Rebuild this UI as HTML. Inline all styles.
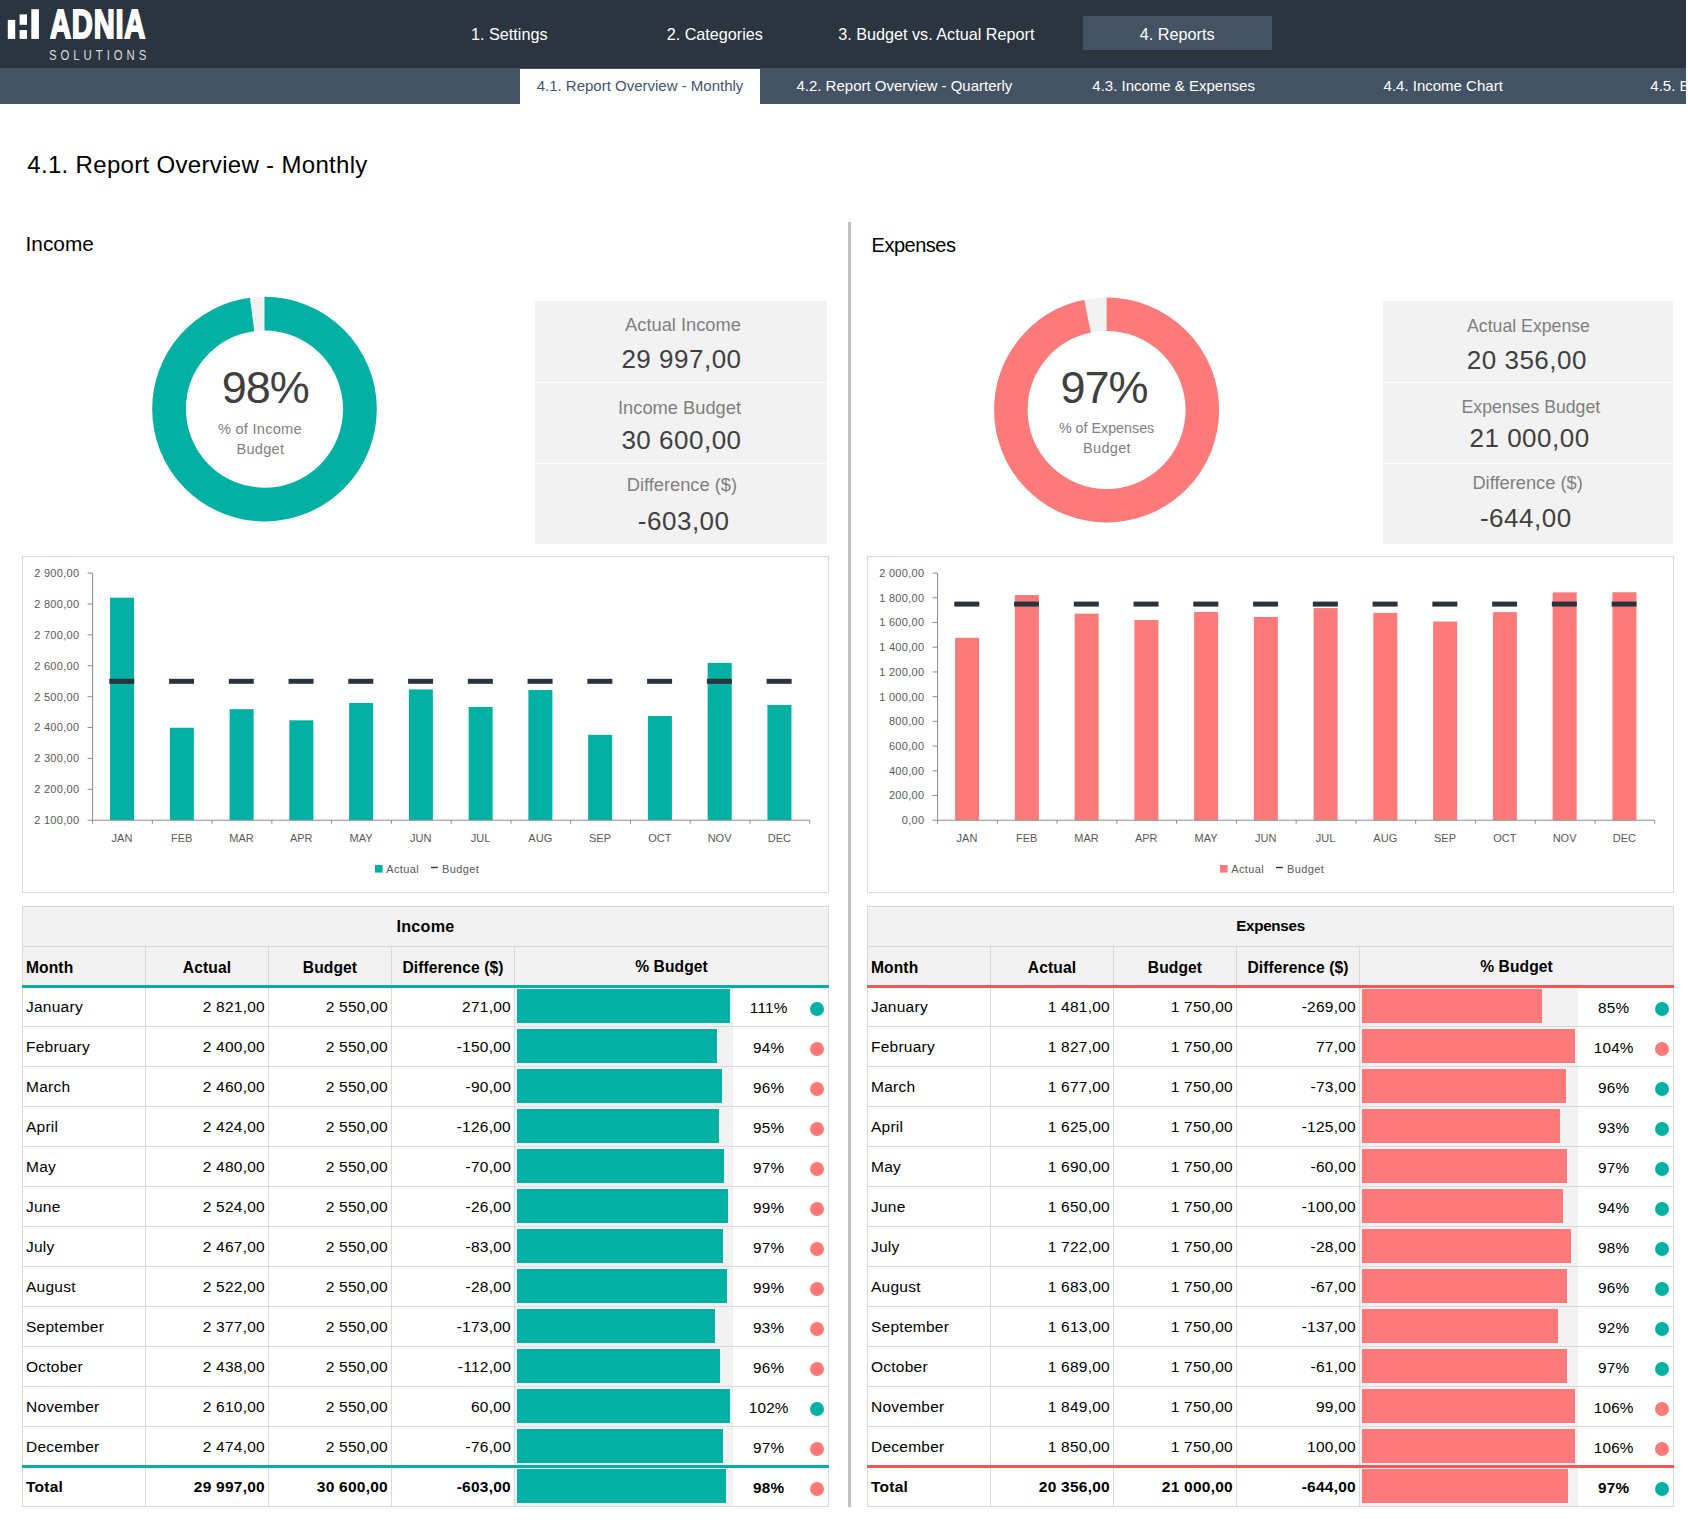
<!DOCTYPE html>
<html lang="en"><head><meta charset="utf-8"><title>4.1. Report Overview - Monthly</title>
<style>
html,body{margin:0;padding:0;background:#fff;}
body{width:1688px;height:1525px;position:relative;overflow:hidden;font-family:"Liberation Sans", sans-serif;}
.abs{position:absolute;}
.t{position:absolute;white-space:nowrap;}
header{position:absolute;left:0;top:0;width:1686px;height:68px;background:#2b353f;}
nav.sub{position:absolute;left:0;top:68px;width:1686px;height:36px;background:#435364;overflow:hidden;}
.tab-on{position:absolute;left:520px;top:1px;width:240px;height:35px;background:#fff;}
.btn-on{position:absolute;left:1083px;top:16px;width:189px;height:34px;background:#435364;}
.vline{position:absolute;left:848px;top:222px;width:3px;height:1285px;background:#bfbfbf;}
.stat{position:absolute;top:301px;width:292px;height:243px;background:#f2f2f2;}
.stat i{position:absolute;left:0;width:100%;height:1px;background:#fff;}
.chartbox{position:absolute;border:1px solid #d9d9d9;background:#fff;}
table.tb{position:absolute;border-collapse:separate;border-spacing:0;table-layout:fixed;width:807px;border-left:1px solid #d9d9d9;border-top:1px solid #d9d9d9;font-size:15.5px;letter-spacing:0.25px;color:#000;}
table.tb th,table.tb td{box-sizing:border-box;border-right:1px solid #d9d9d9;border-bottom:1px solid #d9d9d9;padding:0 3px 0 3px;text-align:right;font-weight:normal;white-space:nowrap;overflow:hidden;vertical-align:top;line-height:16px;}
table.tb th{background:#f2f2f2;font-weight:bold;text-align:center;font-size:15.6px;letter-spacing:0.1px;}
table.tb tr.ttl th{font-size:16.2px;padding-top:11.4px;letter-spacing:0.25px;}
table.tb tr.hd th{padding-top:13.2px;}
table.tb .l{text-align:left;}
table.tb tr.tot td{font-weight:bold;}
table.tb td.pb{padding:0;}
.pw{position:relative;width:313px;overflow:hidden;}
.pw span{position:absolute;display:block;}
.pw .bg{left:0.3px;top:0;width:217.3px;height:100%;background:#f2f2f2;}
.pw .bar{left:2px;height:33.5px;}
.pw .pc{left:203.7px;width:100px;text-align:center;font-size:15.3px;line-height:15.3px;letter-spacing:0.2px;}
.pw .dot{left:294.6px;width:14.2px;height:14.2px;border-radius:50%;}
</style></head><body>

<header>
<svg class="abs" style="left:0;top:0" width="48" height="48" viewBox="0 0 48 48"><rect x="7.8" y="19.9" width="7.4" height="19" fill="#fff"/><rect x="19.6" y="14.4" width="7.4" height="10.4" fill="#fff"/><rect x="19.6" y="30.1" width="7.4" height="8.8" fill="#fff"/><rect x="31.3" y="9.2" width="7.6" height="29.7" fill="#fff"/></svg>
<div class="t" style="left:49.8px;top:3.2px;font-size:41.5px;line-height:41.5px;font-weight:bold;color:#fff;transform-origin:0 0;transform:scaleX(0.70);-webkit-text-stroke:2px #fff;letter-spacing:1.2px">ADNIA</div>
<div class="t" style="left:48.6px;top:47.8px;font-size:14.2px;line-height:14.2px;color:#d9d9d9;letter-spacing:4.95px;transform-origin:0 0;transform:scaleX(0.8)">SOLUTIONS</div>
<div class="btn-on"></div>
<div class="t" style="left:509.30px;top:25.69px;font-size:16.20px;line-height:16.20px;color:#fff;transform:translateX(-50%);">1. Settings</div>
<div class="t" style="left:714.80px;top:25.69px;font-size:16.20px;line-height:16.20px;color:#fff;transform:translateX(-50%);">2. Categories</div>
<div class="t" style="left:936.30px;top:25.69px;font-size:16.20px;line-height:16.20px;color:#fff;transform:translateX(-50%);">3. Budget vs. Actual Report</div>
<div class="t" style="left:1177.20px;top:25.69px;font-size:16.20px;line-height:16.20px;color:#fff;transform:translateX(-50%);">4. Reports</div>
</header>
<nav class="sub"><div class="tab-on"></div>
<div class="t" style="left:640.00px;top:10.30px;font-size:15.00px;line-height:15.00px;color:#44546a;transform:translateX(-50%);">4.1. Report Overview - Monthly</div>
<div class="t" style="left:904.40px;top:10.30px;font-size:15.00px;line-height:15.00px;color:#fff;transform:translateX(-50%);">4.2. Report Overview - Quarterly</div>
<div class="t" style="left:1173.60px;top:9.60px;font-size:15.00px;line-height:15.00px;color:#fff;transform:translateX(-50%);">4.3. Income &amp; Expenses</div>
<div class="t" style="left:1443.20px;top:9.60px;font-size:15.00px;line-height:15.00px;color:#fff;transform:translateX(-50%);">4.4. Income Chart</div>
<div class="t" style="left:1650.30px;top:9.60px;font-size:15.00px;line-height:15.00px;color:#fff;">4.5. Expenses Chart</div>
</nav>
<main>
<div class="t" style="left:27.30px;top:152.88px;font-size:24.00px;line-height:24.00px;color:#000;letter-spacing:0.32px;">4.1. Report Overview - Monthly</div>
<div class="vline"></div>
<section>
<div class="t" style="left:25.60px;top:234.39px;font-size:20.80px;line-height:20.80px;color:#000;">Income</div>
<svg class="abs" style="left:148px;top:292px" width="232" height="232" viewBox="148.00 292.00 232 232"><circle cx="264.50" cy="409.10" r="95.45" fill="none" stroke="#f2f2f2" stroke-width="33.70"/><circle cx="264.50" cy="409.10" r="95.45" fill="none" stroke="#00b0a3" stroke-width="33.70" stroke-dasharray="586.24 599.73" transform="rotate(-90 264.50 409.10)"/></svg>
<div class="t" style="left:265.30px;top:365.21px;font-size:45.00px;line-height:45.00px;color:#404040;transform:translateX(-50%);letter-spacing:-1px;">98%</div>
<div class="t" style="left:259.90px;top:422.04px;font-size:14.60px;line-height:14.60px;color:#7f7f7f;transform:translateX(-50%);letter-spacing:0.25px;">% of Income</div>
<div class="t" style="left:260.40px;top:441.84px;font-size:14.60px;line-height:14.60px;color:#7f7f7f;transform:translateX(-50%);letter-spacing:0.25px;">Budget</div>
<div class="stat" style="left:535px;width:292px"><i style="top:81px"></i><i style="top:162px"></i></div>
<div class="t" style="left:683.00px;top:316.11px;font-size:18.30px;line-height:18.30px;color:#7f7f7f;transform:translateX(-50%);">Actual Income</div>
<div class="t" style="left:681.50px;top:346.29px;font-size:26.00px;line-height:26.00px;color:#404040;transform:translateX(-50%);letter-spacing:0.5px;">29 997,00</div>
<div class="t" style="left:679.50px;top:398.91px;font-size:18.30px;line-height:18.30px;color:#7f7f7f;transform:translateX(-50%);">Income Budget</div>
<div class="t" style="left:681.50px;top:427.09px;font-size:26.00px;line-height:26.00px;color:#404040;transform:translateX(-50%);letter-spacing:0.5px;">30 600,00</div>
<div class="t" style="left:681.90px;top:476.11px;font-size:18.30px;line-height:18.30px;color:#7f7f7f;transform:translateX(-50%);">Difference ($)</div>
<div class="t" style="left:683.70px;top:508.29px;font-size:26.00px;line-height:26.00px;color:#404040;transform:translateX(-50%);letter-spacing:0.5px;">-603,00</div>
<div class="chartbox" style="left:22px;top:556px;width:805px;height:335px"></div><svg class="abs" style="left:22px;top:556px" width="807" height="337" viewBox="22 556 807 337" font-family='"Liberation Sans", sans-serif'><rect x="110.08" y="597.70" width="24.00" height="222.50" fill="#00b0a3"/><rect x="169.84" y="727.74" width="24.00" height="92.46" fill="#00b0a3"/><rect x="229.60" y="709.21" width="24.00" height="111.00" fill="#00b0a3"/><rect x="289.35" y="720.32" width="24.00" height="99.88" fill="#00b0a3"/><rect x="349.11" y="703.03" width="24.00" height="117.17" fill="#00b0a3"/><rect x="408.87" y="689.44" width="24.00" height="130.76" fill="#00b0a3"/><rect x="468.63" y="707.04" width="24.00" height="113.16" fill="#00b0a3"/><rect x="528.39" y="690.05" width="24.00" height="130.15" fill="#00b0a3"/><rect x="588.15" y="734.84" width="24.00" height="85.36" fill="#00b0a3"/><rect x="647.90" y="716.00" width="24.00" height="104.20" fill="#00b0a3"/><rect x="707.66" y="662.87" width="24.00" height="157.33" fill="#00b0a3"/><rect x="767.42" y="704.88" width="24.00" height="115.32" fill="#00b0a3"/><path d="M92.60 573.10 V820.20 H809.70" fill="none" stroke="#8c8c8c" stroke-width="1"/><path d="M87.60 820.20 H92.60" stroke="#8c8c8c" stroke-width="1"/><text x="79.40" y="824.10" font-size="11" letter-spacing="0.3" fill="#595959" text-anchor="end">2 100,00</text><path d="M87.60 789.31 H92.60" stroke="#8c8c8c" stroke-width="1"/><text x="79.40" y="793.21" font-size="11" letter-spacing="0.3" fill="#595959" text-anchor="end">2 200,00</text><path d="M87.60 758.43 H92.60" stroke="#8c8c8c" stroke-width="1"/><text x="79.40" y="762.33" font-size="11" letter-spacing="0.3" fill="#595959" text-anchor="end">2 300,00</text><path d="M87.60 727.54 H92.60" stroke="#8c8c8c" stroke-width="1"/><text x="79.40" y="731.44" font-size="11" letter-spacing="0.3" fill="#595959" text-anchor="end">2 400,00</text><path d="M87.60 696.65 H92.60" stroke="#8c8c8c" stroke-width="1"/><text x="79.40" y="700.55" font-size="11" letter-spacing="0.3" fill="#595959" text-anchor="end">2 500,00</text><path d="M87.60 665.76 H92.60" stroke="#8c8c8c" stroke-width="1"/><text x="79.40" y="669.66" font-size="11" letter-spacing="0.3" fill="#595959" text-anchor="end">2 600,00</text><path d="M87.60 634.88 H92.60" stroke="#8c8c8c" stroke-width="1"/><text x="79.40" y="638.77" font-size="11" letter-spacing="0.3" fill="#595959" text-anchor="end">2 700,00</text><path d="M87.60 603.99 H92.60" stroke="#8c8c8c" stroke-width="1"/><text x="79.40" y="607.89" font-size="11" letter-spacing="0.3" fill="#595959" text-anchor="end">2 800,00</text><path d="M87.60 573.10 H92.60" stroke="#8c8c8c" stroke-width="1"/><text x="79.40" y="577.00" font-size="11" letter-spacing="0.3" fill="#595959" text-anchor="end">2 900,00</text><path d="M92.60 820.20 V823.80" stroke="#8c8c8c" stroke-width="1"/><path d="M152.36 820.20 V823.80" stroke="#8c8c8c" stroke-width="1"/><path d="M212.12 820.20 V823.80" stroke="#8c8c8c" stroke-width="1"/><path d="M271.88 820.20 V823.80" stroke="#8c8c8c" stroke-width="1"/><path d="M331.63 820.20 V823.80" stroke="#8c8c8c" stroke-width="1"/><path d="M391.39 820.20 V823.80" stroke="#8c8c8c" stroke-width="1"/><path d="M451.15 820.20 V823.80" stroke="#8c8c8c" stroke-width="1"/><path d="M510.91 820.20 V823.80" stroke="#8c8c8c" stroke-width="1"/><path d="M570.67 820.20 V823.80" stroke="#8c8c8c" stroke-width="1"/><path d="M630.43 820.20 V823.80" stroke="#8c8c8c" stroke-width="1"/><path d="M690.18 820.20 V823.80" stroke="#8c8c8c" stroke-width="1"/><path d="M749.94 820.20 V823.80" stroke="#8c8c8c" stroke-width="1"/><path d="M809.70 820.20 V823.80" stroke="#8c8c8c" stroke-width="1"/><text x="121.98" y="841.80" font-size="11" fill="#595959" text-anchor="middle">JAN</text><rect x="109.28" y="678.81" width="25" height="5" fill="#2a343e"/><text x="181.74" y="841.80" font-size="11" fill="#595959" text-anchor="middle">FEB</text><rect x="169.04" y="678.81" width="25" height="5" fill="#2a343e"/><text x="241.50" y="841.80" font-size="11" fill="#595959" text-anchor="middle">MAR</text><rect x="228.80" y="678.81" width="25" height="5" fill="#2a343e"/><text x="301.25" y="841.80" font-size="11" fill="#595959" text-anchor="middle">APR</text><rect x="288.55" y="678.81" width="25" height="5" fill="#2a343e"/><text x="361.01" y="841.80" font-size="11" fill="#595959" text-anchor="middle">MAY</text><rect x="348.31" y="678.81" width="25" height="5" fill="#2a343e"/><text x="420.77" y="841.80" font-size="11" fill="#595959" text-anchor="middle">JUN</text><rect x="408.07" y="678.81" width="25" height="5" fill="#2a343e"/><text x="480.53" y="841.80" font-size="11" fill="#595959" text-anchor="middle">JUL</text><rect x="467.83" y="678.81" width="25" height="5" fill="#2a343e"/><text x="540.29" y="841.80" font-size="11" fill="#595959" text-anchor="middle">AUG</text><rect x="527.59" y="678.81" width="25" height="5" fill="#2a343e"/><text x="600.05" y="841.80" font-size="11" fill="#595959" text-anchor="middle">SEP</text><rect x="587.35" y="678.81" width="25" height="5" fill="#2a343e"/><text x="659.80" y="841.80" font-size="11" fill="#595959" text-anchor="middle">OCT</text><rect x="647.10" y="678.81" width="25" height="5" fill="#2a343e"/><text x="719.56" y="841.80" font-size="11" fill="#595959" text-anchor="middle">NOV</text><rect x="706.86" y="678.81" width="25" height="5" fill="#2a343e"/><text x="779.32" y="841.80" font-size="11" fill="#595959" text-anchor="middle">DEC</text><rect x="766.62" y="678.81" width="25" height="5" fill="#2a343e"/><rect x="375.00" y="865" width="7.6" height="7.6" fill="#00b0a3"/><text x="386.20" y="872.6" font-size="11" letter-spacing="0.4" fill="#595959">Actual</text><rect x="431.00" y="866.8" width="6.8" height="1.4" fill="#2a343e"/><text x="441.90" y="872.6" font-size="11" letter-spacing="0.4" fill="#595959">Budget</text></svg>
<table class="tb" style="left:22px;top:906px"><colgroup><col style="width:123px"><col style="width:123px"><col style="width:123px"><col style="width:123px"><col style="width:314px"></colgroup><thead><tr class="ttl" style="height:40px"><th colspan="5">Income</th></tr><tr class="hd" style="height:41px"><th class="l" style="border-bottom:3px solid #00b0a3">Month</th><th style="border-bottom:3px solid #00b0a3">Actual</th><th style="border-bottom:3px solid #00b0a3">Budget</th><th style="border-bottom:3px solid #00b0a3">Difference ($)</th><th style="border-bottom:3px solid #00b0a3;padding-top:12.2px">% Budget</th></tr></thead><tbody><tr style="height:39px"><td class="l" style="padding-top:10.9px;">January</td><td style="padding-top:10.9px;">2 821,00</td><td style="padding-top:10.9px;">2 550,00</td><td style="padding-top:10.9px;">271,00</td><td class="pb"><div class="pw" style="height:38px"><span class="bg"></span><span class="bar" style="top:1.4px;width:212.7px;background:#00b0a3"></span><span class="pc" style="top:12.2px">111%</span><span class="dot" style="top:13.6px;background:#00b0a3"></span></div></td></tr><tr style="height:40px"><td class="l" style="padding-top:11.9px;">February</td><td style="padding-top:11.9px;">2 400,00</td><td style="padding-top:11.9px;">2 550,00</td><td style="padding-top:11.9px;">-150,00</td><td class="pb"><div class="pw" style="height:39px"><span class="bg"></span><span class="bar" style="top:2.4px;width:200.2px;background:#00b0a3"></span><span class="pc" style="top:13.2px">94%</span><span class="dot" style="top:14.6px;background:#fc7b7a"></span></div></td></tr><tr style="height:40px"><td class="l" style="padding-top:11.9px;">March</td><td style="padding-top:11.9px;">2 460,00</td><td style="padding-top:11.9px;">2 550,00</td><td style="padding-top:11.9px;">-90,00</td><td class="pb"><div class="pw" style="height:39px"><span class="bg"></span><span class="bar" style="top:2.4px;width:205.2px;background:#00b0a3"></span><span class="pc" style="top:13.2px">96%</span><span class="dot" style="top:14.6px;background:#fc7b7a"></span></div></td></tr><tr style="height:40px"><td class="l" style="padding-top:11.9px;">April</td><td style="padding-top:11.9px;">2 424,00</td><td style="padding-top:11.9px;">2 550,00</td><td style="padding-top:11.9px;">-126,00</td><td class="pb"><div class="pw" style="height:39px"><span class="bg"></span><span class="bar" style="top:2.4px;width:202.2px;background:#00b0a3"></span><span class="pc" style="top:13.2px">95%</span><span class="dot" style="top:14.6px;background:#fc7b7a"></span></div></td></tr><tr style="height:40px"><td class="l" style="padding-top:11.9px;">May</td><td style="padding-top:11.9px;">2 480,00</td><td style="padding-top:11.9px;">2 550,00</td><td style="padding-top:11.9px;">-70,00</td><td class="pb"><div class="pw" style="height:39px"><span class="bg"></span><span class="bar" style="top:2.4px;width:206.9px;background:#00b0a3"></span><span class="pc" style="top:13.2px">97%</span><span class="dot" style="top:14.6px;background:#fc7b7a"></span></div></td></tr><tr style="height:40px"><td class="l" style="padding-top:11.9px;">June</td><td style="padding-top:11.9px;">2 524,00</td><td style="padding-top:11.9px;">2 550,00</td><td style="padding-top:11.9px;">-26,00</td><td class="pb"><div class="pw" style="height:39px"><span class="bg"></span><span class="bar" style="top:2.4px;width:210.5px;background:#00b0a3"></span><span class="pc" style="top:13.2px">99%</span><span class="dot" style="top:14.6px;background:#fc7b7a"></span></div></td></tr><tr style="height:40px"><td class="l" style="padding-top:11.9px;">July</td><td style="padding-top:11.9px;">2 467,00</td><td style="padding-top:11.9px;">2 550,00</td><td style="padding-top:11.9px;">-83,00</td><td class="pb"><div class="pw" style="height:39px"><span class="bg"></span><span class="bar" style="top:2.4px;width:205.8px;background:#00b0a3"></span><span class="pc" style="top:13.2px">97%</span><span class="dot" style="top:14.6px;background:#fc7b7a"></span></div></td></tr><tr style="height:40px"><td class="l" style="padding-top:11.9px;">August</td><td style="padding-top:11.9px;">2 522,00</td><td style="padding-top:11.9px;">2 550,00</td><td style="padding-top:11.9px;">-28,00</td><td class="pb"><div class="pw" style="height:39px"><span class="bg"></span><span class="bar" style="top:2.4px;width:210.4px;background:#00b0a3"></span><span class="pc" style="top:13.2px">99%</span><span class="dot" style="top:14.6px;background:#fc7b7a"></span></div></td></tr><tr style="height:40px"><td class="l" style="padding-top:11.9px;">September</td><td style="padding-top:11.9px;">2 377,00</td><td style="padding-top:11.9px;">2 550,00</td><td style="padding-top:11.9px;">-173,00</td><td class="pb"><div class="pw" style="height:39px"><span class="bg"></span><span class="bar" style="top:2.4px;width:198.3px;background:#00b0a3"></span><span class="pc" style="top:13.2px">93%</span><span class="dot" style="top:14.6px;background:#fc7b7a"></span></div></td></tr><tr style="height:40px"><td class="l" style="padding-top:11.9px;">October</td><td style="padding-top:11.9px;">2 438,00</td><td style="padding-top:11.9px;">2 550,00</td><td style="padding-top:11.9px;">-112,00</td><td class="pb"><div class="pw" style="height:39px"><span class="bg"></span><span class="bar" style="top:2.4px;width:203.4px;background:#00b0a3"></span><span class="pc" style="top:13.2px">96%</span><span class="dot" style="top:14.6px;background:#fc7b7a"></span></div></td></tr><tr style="height:40px"><td class="l" style="padding-top:11.9px;">November</td><td style="padding-top:11.9px;">2 610,00</td><td style="padding-top:11.9px;">2 550,00</td><td style="padding-top:11.9px;">60,00</td><td class="pb"><div class="pw" style="height:39px"><span class="bg"></span><span class="bar" style="top:2.4px;width:212.7px;background:#00b0a3"></span><span class="pc" style="top:13.2px">102%</span><span class="dot" style="top:14.6px;background:#00b0a3"></span></div></td></tr><tr style="height:41px"><td class="l" style="padding-top:11.9px;border-bottom:3px solid #00b0a3;">December</td><td style="padding-top:11.9px;border-bottom:3px solid #00b0a3;">2 474,00</td><td style="padding-top:11.9px;border-bottom:3px solid #00b0a3;">2 550,00</td><td style="padding-top:11.9px;border-bottom:3px solid #00b0a3;">-76,00</td><td class="pb" style="border-bottom:3px solid #00b0a3"><div class="pw" style="height:38px"><span class="bg"></span><span class="bar" style="top:2.4px;width:206.4px;background:#00b0a3"></span><span class="pc" style="top:13.2px">97%</span><span class="dot" style="top:14.6px;background:#fc7b7a"></span></div></td></tr><tr class="tot" style="height:39px"><td class="l" style="padding-top:10.9px;">Total</td><td style="padding-top:10.9px;">29 997,00</td><td style="padding-top:10.9px;">30 600,00</td><td style="padding-top:10.9px;">-603,00</td><td class="pb"><div class="pw" style="height:38px"><span class="bg"></span><span class="bar" style="top:1.4px;width:208.5px;background:#00b0a3"></span><span class="pc" style="top:12.2px">98%</span><span class="dot" style="top:13.6px;background:#fc7b7a"></span></div></td></tr></tbody></table><div class="abs" style="left:22px;top:985px;width:807px;height:3px;background:#00b0a3"></div><div class="abs" style="left:22px;top:1465px;width:807px;height:3px;background:#00b0a3"></div>
</section>
<section>
<div class="t" style="left:871.60px;top:235.07px;font-size:20.00px;line-height:20.00px;color:#000;letter-spacing:-0.5px;">Expenses</div>
<svg class="abs" style="left:990px;top:293px" width="233" height="233" viewBox="990.00 293.00 233 233"><circle cx="1106.60" cy="410.00" r="95.75" fill="none" stroke="#f2f2f2" stroke-width="33.50"/><circle cx="1106.60" cy="410.00" r="95.75" fill="none" stroke="#fc7b7a" stroke-width="33.50" stroke-dasharray="581.46 601.61" transform="rotate(-90 1106.60 410.00)"/></svg>
<div class="t" style="left:1104.10px;top:365.21px;font-size:45.00px;line-height:45.00px;color:#404040;transform:translateX(-50%);letter-spacing:-1px;">97%</div>
<div class="t" style="left:1106.60px;top:421.20px;font-size:14.30px;line-height:14.30px;color:#7f7f7f;transform:translateX(-50%);">% of Expenses</div>
<div class="t" style="left:1107.00px;top:441.14px;font-size:14.60px;line-height:14.60px;color:#7f7f7f;transform:translateX(-50%);letter-spacing:0.25px;">Budget</div>
<div class="stat" style="left:1383px;width:290px"><i style="top:81px"></i><i style="top:162px"></i></div>
<div class="t" style="left:1528.50px;top:318.42px;font-size:17.70px;line-height:17.70px;color:#7f7f7f;transform:translateX(-50%);">Actual Expense</div>
<div class="t" style="left:1526.90px;top:346.59px;font-size:26.00px;line-height:26.00px;color:#404040;transform:translateX(-50%);letter-spacing:0.5px;">20 356,00</div>
<div class="t" style="left:1530.90px;top:399.42px;font-size:17.70px;line-height:17.70px;color:#7f7f7f;transform:translateX(-50%);">Expenses Budget</div>
<div class="t" style="left:1529.60px;top:425.39px;font-size:26.00px;line-height:26.00px;color:#404040;transform:translateX(-50%);letter-spacing:0.5px;">21 000,00</div>
<div class="t" style="left:1527.60px;top:474.11px;font-size:18.30px;line-height:18.30px;color:#7f7f7f;transform:translateX(-50%);">Difference ($)</div>
<div class="t" style="left:1525.80px;top:504.99px;font-size:26.00px;line-height:26.00px;color:#404040;transform:translateX(-50%);letter-spacing:0.5px;">-644,00</div>
<div class="chartbox" style="left:867px;top:556px;width:805px;height:335px"></div><svg class="abs" style="left:867px;top:556px" width="807" height="337" viewBox="867 556 807 337" font-family='"Liberation Sans", sans-serif'><rect x="955.08" y="637.82" width="24.00" height="182.38" fill="#fc7b7a"/><rect x="1014.84" y="595.07" width="24.00" height="225.13" fill="#fc7b7a"/><rect x="1074.60" y="613.61" width="24.00" height="206.59" fill="#fc7b7a"/><rect x="1134.35" y="620.03" width="24.00" height="200.17" fill="#fc7b7a"/><rect x="1194.11" y="612.00" width="24.00" height="208.20" fill="#fc7b7a"/><rect x="1253.87" y="616.94" width="24.00" height="203.26" fill="#fc7b7a"/><rect x="1313.63" y="608.05" width="24.00" height="212.15" fill="#fc7b7a"/><rect x="1373.39" y="612.87" width="24.00" height="207.33" fill="#fc7b7a"/><rect x="1433.15" y="621.51" width="24.00" height="198.69" fill="#fc7b7a"/><rect x="1492.90" y="612.12" width="24.00" height="208.08" fill="#fc7b7a"/><rect x="1552.66" y="592.36" width="24.00" height="227.84" fill="#fc7b7a"/><rect x="1612.42" y="592.23" width="24.00" height="227.97" fill="#fc7b7a"/><path d="M937.60 573.10 V820.20 H1654.70" fill="none" stroke="#8c8c8c" stroke-width="1"/><path d="M932.60 820.20 H937.60" stroke="#8c8c8c" stroke-width="1"/><text x="924.40" y="824.10" font-size="11" letter-spacing="0.3" fill="#595959" text-anchor="end">0,00</text><path d="M932.60 795.49 H937.60" stroke="#8c8c8c" stroke-width="1"/><text x="924.40" y="799.39" font-size="11" letter-spacing="0.3" fill="#595959" text-anchor="end">200,00</text><path d="M932.60 770.78 H937.60" stroke="#8c8c8c" stroke-width="1"/><text x="924.40" y="774.68" font-size="11" letter-spacing="0.3" fill="#595959" text-anchor="end">400,00</text><path d="M932.60 746.07 H937.60" stroke="#8c8c8c" stroke-width="1"/><text x="924.40" y="749.97" font-size="11" letter-spacing="0.3" fill="#595959" text-anchor="end">600,00</text><path d="M932.60 721.36 H937.60" stroke="#8c8c8c" stroke-width="1"/><text x="924.40" y="725.26" font-size="11" letter-spacing="0.3" fill="#595959" text-anchor="end">800,00</text><path d="M932.60 696.65 H937.60" stroke="#8c8c8c" stroke-width="1"/><text x="924.40" y="700.55" font-size="11" letter-spacing="0.3" fill="#595959" text-anchor="end">1 000,00</text><path d="M932.60 671.94 H937.60" stroke="#8c8c8c" stroke-width="1"/><text x="924.40" y="675.84" font-size="11" letter-spacing="0.3" fill="#595959" text-anchor="end">1 200,00</text><path d="M932.60 647.23 H937.60" stroke="#8c8c8c" stroke-width="1"/><text x="924.40" y="651.13" font-size="11" letter-spacing="0.3" fill="#595959" text-anchor="end">1 400,00</text><path d="M932.60 622.52 H937.60" stroke="#8c8c8c" stroke-width="1"/><text x="924.40" y="626.42" font-size="11" letter-spacing="0.3" fill="#595959" text-anchor="end">1 600,00</text><path d="M932.60 597.81 H937.60" stroke="#8c8c8c" stroke-width="1"/><text x="924.40" y="601.71" font-size="11" letter-spacing="0.3" fill="#595959" text-anchor="end">1 800,00</text><path d="M932.60 573.10 H937.60" stroke="#8c8c8c" stroke-width="1"/><text x="924.40" y="577.00" font-size="11" letter-spacing="0.3" fill="#595959" text-anchor="end">2 000,00</text><path d="M937.60 820.20 V823.80" stroke="#8c8c8c" stroke-width="1"/><path d="M997.36 820.20 V823.80" stroke="#8c8c8c" stroke-width="1"/><path d="M1057.12 820.20 V823.80" stroke="#8c8c8c" stroke-width="1"/><path d="M1116.88 820.20 V823.80" stroke="#8c8c8c" stroke-width="1"/><path d="M1176.63 820.20 V823.80" stroke="#8c8c8c" stroke-width="1"/><path d="M1236.39 820.20 V823.80" stroke="#8c8c8c" stroke-width="1"/><path d="M1296.15 820.20 V823.80" stroke="#8c8c8c" stroke-width="1"/><path d="M1355.91 820.20 V823.80" stroke="#8c8c8c" stroke-width="1"/><path d="M1415.67 820.20 V823.80" stroke="#8c8c8c" stroke-width="1"/><path d="M1475.43 820.20 V823.80" stroke="#8c8c8c" stroke-width="1"/><path d="M1535.18 820.20 V823.80" stroke="#8c8c8c" stroke-width="1"/><path d="M1594.94 820.20 V823.80" stroke="#8c8c8c" stroke-width="1"/><path d="M1654.70 820.20 V823.80" stroke="#8c8c8c" stroke-width="1"/><text x="966.98" y="841.80" font-size="11" fill="#595959" text-anchor="middle">JAN</text><rect x="954.28" y="601.59" width="25" height="5" fill="#2a343e"/><text x="1026.74" y="841.80" font-size="11" fill="#595959" text-anchor="middle">FEB</text><rect x="1014.04" y="601.59" width="25" height="5" fill="#2a343e"/><text x="1086.50" y="841.80" font-size="11" fill="#595959" text-anchor="middle">MAR</text><rect x="1073.80" y="601.59" width="25" height="5" fill="#2a343e"/><text x="1146.25" y="841.80" font-size="11" fill="#595959" text-anchor="middle">APR</text><rect x="1133.55" y="601.59" width="25" height="5" fill="#2a343e"/><text x="1206.01" y="841.80" font-size="11" fill="#595959" text-anchor="middle">MAY</text><rect x="1193.31" y="601.59" width="25" height="5" fill="#2a343e"/><text x="1265.77" y="841.80" font-size="11" fill="#595959" text-anchor="middle">JUN</text><rect x="1253.07" y="601.59" width="25" height="5" fill="#2a343e"/><text x="1325.53" y="841.80" font-size="11" fill="#595959" text-anchor="middle">JUL</text><rect x="1312.83" y="601.59" width="25" height="5" fill="#2a343e"/><text x="1385.29" y="841.80" font-size="11" fill="#595959" text-anchor="middle">AUG</text><rect x="1372.59" y="601.59" width="25" height="5" fill="#2a343e"/><text x="1445.05" y="841.80" font-size="11" fill="#595959" text-anchor="middle">SEP</text><rect x="1432.35" y="601.59" width="25" height="5" fill="#2a343e"/><text x="1504.80" y="841.80" font-size="11" fill="#595959" text-anchor="middle">OCT</text><rect x="1492.10" y="601.59" width="25" height="5" fill="#2a343e"/><text x="1564.56" y="841.80" font-size="11" fill="#595959" text-anchor="middle">NOV</text><rect x="1551.86" y="601.59" width="25" height="5" fill="#2a343e"/><text x="1624.32" y="841.80" font-size="11" fill="#595959" text-anchor="middle">DEC</text><rect x="1611.62" y="601.59" width="25" height="5" fill="#2a343e"/><rect x="1220.00" y="865" width="7.6" height="7.6" fill="#fc7b7a"/><text x="1231.20" y="872.6" font-size="11" letter-spacing="0.4" fill="#595959">Actual</text><rect x="1276.00" y="866.8" width="6.8" height="1.4" fill="#2a343e"/><text x="1286.90" y="872.6" font-size="11" letter-spacing="0.4" fill="#595959">Budget</text></svg>
<table class="tb" style="left:867px;top:906px"><colgroup><col style="width:123px"><col style="width:123px"><col style="width:123px"><col style="width:123px"><col style="width:314px"></colgroup><thead><tr class="ttl" style="height:40px"><th colspan="5" style="font-size:15.2px;letter-spacing:-0.3px">Expenses</th></tr><tr class="hd" style="height:41px"><th class="l" style="border-bottom:3px solid #fb5552">Month</th><th style="border-bottom:3px solid #fb5552">Actual</th><th style="border-bottom:3px solid #fb5552">Budget</th><th style="border-bottom:3px solid #fb5552">Difference ($)</th><th style="border-bottom:3px solid #fb5552;padding-top:12.2px">% Budget</th></tr></thead><tbody><tr style="height:39px"><td class="l" style="padding-top:10.9px;">January</td><td style="padding-top:10.9px;">1 481,00</td><td style="padding-top:10.9px;">1 750,00</td><td style="padding-top:10.9px;">-269,00</td><td class="pb"><div class="pw" style="height:38px"><span class="bg"></span><span class="bar" style="top:1.4px;width:180.0px;background:#fc7b7a"></span><span class="pc" style="top:12.2px">85%</span><span class="dot" style="top:13.6px;background:#00b0a3"></span></div></td></tr><tr style="height:40px"><td class="l" style="padding-top:11.9px;">February</td><td style="padding-top:11.9px;">1 827,00</td><td style="padding-top:11.9px;">1 750,00</td><td style="padding-top:11.9px;">77,00</td><td class="pb"><div class="pw" style="height:39px"><span class="bg"></span><span class="bar" style="top:2.4px;width:212.7px;background:#fc7b7a"></span><span class="pc" style="top:13.2px">104%</span><span class="dot" style="top:14.6px;background:#fc7b7a"></span></div></td></tr><tr style="height:40px"><td class="l" style="padding-top:11.9px;">March</td><td style="padding-top:11.9px;">1 677,00</td><td style="padding-top:11.9px;">1 750,00</td><td style="padding-top:11.9px;">-73,00</td><td class="pb"><div class="pw" style="height:39px"><span class="bg"></span><span class="bar" style="top:2.4px;width:203.8px;background:#fc7b7a"></span><span class="pc" style="top:13.2px">96%</span><span class="dot" style="top:14.6px;background:#00b0a3"></span></div></td></tr><tr style="height:40px"><td class="l" style="padding-top:11.9px;">April</td><td style="padding-top:11.9px;">1 625,00</td><td style="padding-top:11.9px;">1 750,00</td><td style="padding-top:11.9px;">-125,00</td><td class="pb"><div class="pw" style="height:39px"><span class="bg"></span><span class="bar" style="top:2.4px;width:197.5px;background:#fc7b7a"></span><span class="pc" style="top:13.2px">93%</span><span class="dot" style="top:14.6px;background:#00b0a3"></span></div></td></tr><tr style="height:40px"><td class="l" style="padding-top:11.9px;">May</td><td style="padding-top:11.9px;">1 690,00</td><td style="padding-top:11.9px;">1 750,00</td><td style="padding-top:11.9px;">-60,00</td><td class="pb"><div class="pw" style="height:39px"><span class="bg"></span><span class="bar" style="top:2.4px;width:205.4px;background:#fc7b7a"></span><span class="pc" style="top:13.2px">97%</span><span class="dot" style="top:14.6px;background:#00b0a3"></span></div></td></tr><tr style="height:40px"><td class="l" style="padding-top:11.9px;">June</td><td style="padding-top:11.9px;">1 650,00</td><td style="padding-top:11.9px;">1 750,00</td><td style="padding-top:11.9px;">-100,00</td><td class="pb"><div class="pw" style="height:39px"><span class="bg"></span><span class="bar" style="top:2.4px;width:200.5px;background:#fc7b7a"></span><span class="pc" style="top:13.2px">94%</span><span class="dot" style="top:14.6px;background:#00b0a3"></span></div></td></tr><tr style="height:40px"><td class="l" style="padding-top:11.9px;">July</td><td style="padding-top:11.9px;">1 722,00</td><td style="padding-top:11.9px;">1 750,00</td><td style="padding-top:11.9px;">-28,00</td><td class="pb"><div class="pw" style="height:39px"><span class="bg"></span><span class="bar" style="top:2.4px;width:209.3px;background:#fc7b7a"></span><span class="pc" style="top:13.2px">98%</span><span class="dot" style="top:14.6px;background:#00b0a3"></span></div></td></tr><tr style="height:40px"><td class="l" style="padding-top:11.9px;">August</td><td style="padding-top:11.9px;">1 683,00</td><td style="padding-top:11.9px;">1 750,00</td><td style="padding-top:11.9px;">-67,00</td><td class="pb"><div class="pw" style="height:39px"><span class="bg"></span><span class="bar" style="top:2.4px;width:204.6px;background:#fc7b7a"></span><span class="pc" style="top:13.2px">96%</span><span class="dot" style="top:14.6px;background:#00b0a3"></span></div></td></tr><tr style="height:40px"><td class="l" style="padding-top:11.9px;">September</td><td style="padding-top:11.9px;">1 613,00</td><td style="padding-top:11.9px;">1 750,00</td><td style="padding-top:11.9px;">-137,00</td><td class="pb"><div class="pw" style="height:39px"><span class="bg"></span><span class="bar" style="top:2.4px;width:196.0px;background:#fc7b7a"></span><span class="pc" style="top:13.2px">92%</span><span class="dot" style="top:14.6px;background:#00b0a3"></span></div></td></tr><tr style="height:40px"><td class="l" style="padding-top:11.9px;">October</td><td style="padding-top:11.9px;">1 689,00</td><td style="padding-top:11.9px;">1 750,00</td><td style="padding-top:11.9px;">-61,00</td><td class="pb"><div class="pw" style="height:39px"><span class="bg"></span><span class="bar" style="top:2.4px;width:205.3px;background:#fc7b7a"></span><span class="pc" style="top:13.2px">97%</span><span class="dot" style="top:14.6px;background:#00b0a3"></span></div></td></tr><tr style="height:40px"><td class="l" style="padding-top:11.9px;">November</td><td style="padding-top:11.9px;">1 849,00</td><td style="padding-top:11.9px;">1 750,00</td><td style="padding-top:11.9px;">99,00</td><td class="pb"><div class="pw" style="height:39px"><span class="bg"></span><span class="bar" style="top:2.4px;width:212.7px;background:#fc7b7a"></span><span class="pc" style="top:13.2px">106%</span><span class="dot" style="top:14.6px;background:#fc7b7a"></span></div></td></tr><tr style="height:41px"><td class="l" style="padding-top:11.9px;border-bottom:3px solid #fb5552;">December</td><td style="padding-top:11.9px;border-bottom:3px solid #fb5552;">1 850,00</td><td style="padding-top:11.9px;border-bottom:3px solid #fb5552;">1 750,00</td><td style="padding-top:11.9px;border-bottom:3px solid #fb5552;">100,00</td><td class="pb" style="border-bottom:3px solid #fb5552"><div class="pw" style="height:38px"><span class="bg"></span><span class="bar" style="top:2.4px;width:212.7px;background:#fc7b7a"></span><span class="pc" style="top:13.2px">106%</span><span class="dot" style="top:14.6px;background:#fc7b7a"></span></div></td></tr><tr class="tot" style="height:39px"><td class="l" style="padding-top:10.9px;">Total</td><td style="padding-top:10.9px;">20 356,00</td><td style="padding-top:10.9px;">21 000,00</td><td style="padding-top:10.9px;">-644,00</td><td class="pb"><div class="pw" style="height:38px"><span class="bg"></span><span class="bar" style="top:1.4px;width:206.2px;background:#fc7b7a"></span><span class="pc" style="top:12.2px">97%</span><span class="dot" style="top:13.6px;background:#00b0a3"></span></div></td></tr></tbody></table><div class="abs" style="left:867px;top:985px;width:807px;height:3px;background:#fb5552"></div><div class="abs" style="left:867px;top:1465px;width:807px;height:3px;background:#fb5552"></div>
</section>
</main></body></html>
